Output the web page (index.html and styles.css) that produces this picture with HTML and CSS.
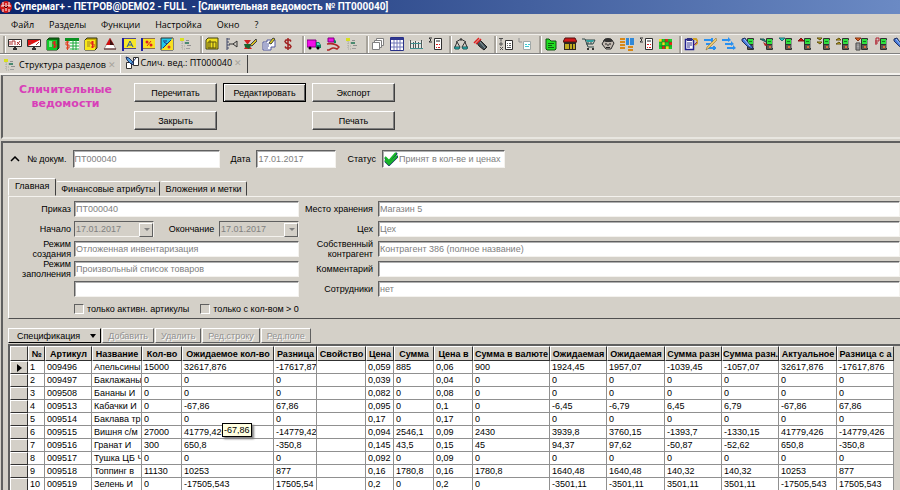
FILE: index.html
```html
<!DOCTYPE html>
<html lang="ru">
<head>
    <meta charset="UTF-8">
    <meta name="viewport" content="width=device-width, initial-scale=1.0">
    <title>Супермаг+ - Сличительная ведомость № ПТ000040</title>
    <link rel="stylesheet" href="styles.css">
</head>
<body>

<!-- общие элементы иконок -->
<svg class="sprite">
    <symbol id="tree" viewBox="0 0 14 14">
        <path d="M3 4v8M3 6h4M3 9h4M3 12h4" stroke="#a8a8a0" fill="none" stroke-dasharray="1 1"/>
        <path d="M1 1h4v3H1z" fill="#d8e020"/><path d="M7 3h3v1H7zM8 8h4v1H8z" fill="#909090"/><path d="M6 5h4v2H6z" fill="#4a8a70"/><path d="M7 11h4v1H7z" fill="#a0a0a0"/>
    </symbol>
    <symbol id="term" viewBox="0 0 14 14">
        <rect x="6" y="1" width="7" height="12" rx="1" fill="#303030"/>
        <path d="M7 2h5v5H7z" fill="#30e040"/><path d="M8 4h3v1H8z" fill="#108020"/>
        <path d="M7 8h5v4H7z" fill="#605850"/><path d="M9 9h2v2H9z" fill="#e07040"/><path d="M12 3h1v8h-1z" fill="#909090"/>
    </symbol>
    <symbol id="sumdoc" viewBox="0 0 14 14">
        <path d="M4 1H1l2 2-2 2h3" stroke="#303030" fill="none"/>
        <path d="M6.500 1.500h7v11h-7z" fill="#fff" stroke="#303030"/><path d="M8 3h4v2H8z" fill="#909090"/>
        <path d="M8 7.500h2M11 7.500h1M8 10.500h1M10 10.500h2" stroke="#e02020"/>
    </symbol>
    <symbol id="torch" viewBox="0 0 14 14">
        <path d="M1 2l3-1 4 6 3 2 1 3-3-1-3-2-5-5z" fill="#4878d8" stroke="#203060"/>
        <path d="M3 2l6 7" stroke="#a8d0ff"/>
    </symbol>
</svg>

<div class="window">
    <header class="titlebar">
        <svg viewBox="0 0 12 12"><circle cx="6" cy="6" r="6" fill="#d01818"/><path d="M3 1v4M9 1v4M1 5h4M7 5h4M3 8v3M9 8v3M6 2v8" stroke="#fff"/><path d="M4 5l2 2 2-2" stroke="#400" fill="none"/></svg>
        <h1>Супермаг+ - ПЕТРОВ@DEMO2 - FULL&nbsp; - [Сличительная ведомость № ПТ000040]</h1>
    </header>

    <nav class="menu">
        <a href="#">Файл</a>
        <a href="#">Разделы</a>
        <a href="#">Функции</a>
        <a href="#">Настройка</a>
        <a href="#">Окно</a>
        <a href="#">?</a>
    </nav>

    <div class="toolbar">
        <div class="group">
            <svg viewBox="0 0 14 14"><path d="M.500 2.500h13v7H.500z" fill="#fff" stroke="#303030"/><path d="M2 4v4M4 4v4M7 4v4M4 4h3M9 5l3 3M12 4L9 8" stroke="#b03030" fill="none"/><path d="M5 12h4M7 10v3" stroke="#303030" stroke-width="2"/></svg>
            <svg viewBox="0 0 14 14"><path d="M.500 2.500h13v7H.500z" fill="#fff" stroke="#303030"/><path d="M1 3h12L7 6 1 9z" fill="#e01010"/><path d="M9 8l3-3M3 4l2 3" stroke="#b03030"/><path d="M5 12h4M7 10v3" stroke="#303030" stroke-width="2"/></svg>
            <svg viewBox="0 0 14 14"><path d="M1 3l2-2h10v10l-2 2H1z" fill="#087010" stroke="#104010"/><path d="M1 3h10v10H1z" fill="#10c828"/><path d="M3 5h3M3 7h3M3 9h3" stroke="#e8ffe0"/><path d="M10 5H7v2h3v3H7M8.500 4v7" stroke="#e02020" fill="none"/></svg>
            <svg viewBox="0 0 14 14"><path d="M0 1h14v3H0z" fill="#089020"/><path d="M5 4v9h9V4z" fill="#fff"/><path d="M5 6h9M5 9h9M5 12h9M8 3v10M11 3v10" stroke="#18a838"/><path d="M4 5H1v3h3v3H1M2.500 4v9" stroke="#e04020" fill="none"/></svg>
            <svg viewBox="0 0 14 14"><path d="M1 3l2-2h10v10l-2 2H1z" fill="#c8b000" stroke="#303010"/><path d="M1 3h10v10H1z" fill="#f8e818"/><path d="M3 5h3M3 7h3M3 9h3" stroke="#a08020"/><path d="M10 5H7v2h3v3H7M8.500 4v7" stroke="#e02020" fill="none"/></svg>
            <svg viewBox="0 0 14 14"><path d="M7 1l6 11H1z" fill="#fff" stroke="#a09090"/><path d="M7 1l4 7H3z" fill="#d01010"/><path d="M7 2v6h4z" fill="#401010"/><path d="M1 12h12" stroke="#502020"/></svg>
            <svg viewBox="0 0 14 14"><path d="M1 1v13" stroke="#2020a0" stroke-width="2"/><path d="M2 2h12v9H2z" fill="#f8e828"/><path d="M2 1.500h12M2 11.500h12" stroke="#504890"/><path d="M5 10l3-6 3 6M6 8h4" stroke="#2050a0" fill="none"/></svg>
            <svg viewBox="0 0 14 14"><path d="M1 1v13" stroke="#2020a0" stroke-width="2"/><path d="M2 2h12v9H2z" fill="#f8e020"/><path d="M2 1.500h12M2 11.500h12" stroke="#907050"/><path d="M6 9l4-5" stroke="#e02020"/><circle cx="6" cy="5" r="1.500" fill="#e02020"/><circle cx="10" cy="8" r="1.500" fill="#e02020"/></svg>
            <svg viewBox="0 0 14 14"><path d="M1 1h12v12H1z" fill="#20c8e8" stroke="#303030"/><path d="M13 1v12H1z" fill="#f8e020"/><path d="M3 11l8-8M3 4h4M4 5l3 2" stroke="#203080"/><circle cx="9" cy="10" r="1.500" fill="#e04020"/></svg>
            <svg><use href="#tree"/></svg>
        </div>
        <div class="group">
            <svg viewBox="0 0 14 14"><path d="M1 3l2-2h10v11H1z" fill="#f0e020" stroke="#404010"/><path d="M3 5h8v6H3zM5 3v8M8 5v6" stroke="#585010" fill="none"/></svg>
            <svg viewBox="0 0 14 14"><path d="M3 1v12M3 2h3M3 5h2M3 8h3M3 11h2" stroke="#404868" fill="none"/><path d="M5 7h4l4-3v6L9 7" stroke="#303030" fill="none"/></svg>
            <svg viewBox="0 0 14 14"><path d="M1 3h7L5 7l4 5H1l3-5z" fill="#d02020"/><path d="M1 7h8l-3 5-4-2z" fill="#186830"/><path d="M7 8l6-6 1 2-5 5z" fill="#d8c020" stroke="#404040"/></svg>
            <svg viewBox="0 0 14 14"><path d="M5 3h8v7H9v3H1V5h4z" fill="#fff" stroke="#5058a0"/><path d="M2 7h5M2 9h5M2 11h4" stroke="#5058a0"/><path d="M7 6l4-5 2 1-4 5z" fill="#e0d020" stroke="#404040"/></svg>
            <svg viewBox="0 0 14 14"><path d="M10 4.500L9 3H5L4 4.500 5 6l4 2 1 1.500L9 11H5L4 9.500M7 1v12" stroke="#a02020" fill="none" stroke-width="1.500"/></svg>
        </div>
        <div class="group">
            <svg viewBox="0 0 14 14"><path d="M0 3h9v7H0z" fill="#f010e8" stroke="#800080"/><path d="M9 5h3l2 3v3H9z" fill="#108060"/><path d="M10 6h2l1 2h-3z" fill="#50e0c0"/><circle cx="3" cy="11" r="1.500"/><circle cx="11" cy="11" r="1.500"/></svg>
            <svg viewBox="0 0 14 14"><path d="M2 1h6v4H2z" fill="#f010e8" stroke="#800080"/><path d="M8 2l2 2v2H8z" fill="#108060"/><path d="M1 7c5-1 9 0 12 3l-2 2c-4-2-5-1-8 1H1" stroke="#b02828" fill="none" stroke-width="1.500"/></svg>
            <svg><use href="#tree"/></svg>
        </div>
        <div class="group">
            <svg viewBox="0 0 14 14"><path d="M5.500 1.500h7v7h-7z" fill="#fff" stroke="#808080"/><path d="M3.500 3.500h7v7h-7z" fill="#fff" stroke="#808080"/><path d="M1.500 5.500h7v7h-7z" fill="#fff" stroke="#808080"/></svg>
            <svg viewBox="0 0 14 14"><path d="M.500.500h13v13H.500z" fill="#fff" stroke="#283088"/><path d="M1 1h12v2H1z" fill="#303890"/><path d="M4 3v10M7 3v10M10 3v10M1 6h12M1 10h12" stroke="#7078b8"/></svg>
            <svg viewBox="0 0 14 14"><path d="M0 4h14v8H0z" fill="#e8e8e4"/><path d="M1.500 3v9M4.500 5v7M6.500 4v8M9.500 5v7M12.500 3v9" stroke="#505858"/><path d="M2 6.500h10M1 11.500h13" stroke="#409090"/></svg>
            <svg><use href="#sumdoc"/></svg>
        </div>
        <div class="group">
            <svg viewBox="0 0 14 14"><path d="M7 1v3M2 5l5-3 5 3M3 5L1 10M3 5l3 5M11 5l-3 5M11 5l2 5" stroke="#303030" fill="none"/><path d="M0 10h6l-1 2H1zM8 10h6l-1 2H9z" fill="#20d0d0" stroke="#205050"/></svg>
            <svg viewBox="0 0 14 14"><path d="M4 6l3-3 2 2 5 5-3 3-5-4z" fill="#405058" stroke="#202020"/><path d="M7 5l5 6" stroke="#90a0a0"/><path d="M1 6l5-5M3 7l5-5" fill="none" stroke="#e02020" stroke-width="1.500"/></svg>
        </div>
        <div class="group">
            <svg viewBox="0 0 14 14"><path d="M0 1.500h4M2 1.500v3M1 6h2v2H1zM1 10l3 3M4 10l-3 3" stroke="#505050" fill="none"/><path d="M6.500 3.500h7v9h-7z" fill="#fff" stroke="#303030"/><path d="M8 6.500h1M10 6.500h2M8 8.500h1M10 8.500h2M8 10.500h4" stroke="#606060"/></svg>
            <svg viewBox="0 0 14 14"><path d="M1 1v4h3" stroke="#909090" fill="none"/><path d="M5.500 4.500h7v8h-7z" fill="#f8ffff" stroke="#a0a8a8"/><path d="M7 7.500h2M10 7.500h2M7 9.500h4" stroke="#40c8d0"/></svg>
        </div>
        <div class="group">
            <svg viewBox="0 0 14 14"><path d="M2 2h3l2 2h5v8l-1 1H3l-1-1z" fill="#20e020" stroke="#105010"/><path d="M4 6.500h6M4 8.500h4M4 10.500h6" stroke="#106010"/></svg>
            <svg viewBox="0 0 14 14"><path d="M2 1h10l2 4H0z" fill="#d01818" stroke="#501010"/><path d="M1 5h12v8H1z" fill="#302820"/><path d="M3 7v5M5 7v5M8 7v5M11 7v5" stroke="#f0d820" stroke-width="1.500"/></svg>
            <svg viewBox="0 0 14 14"><path d="M0 2h3l3 8h6M3 3h10l-2 4H4M6 3v4M9 3v4" stroke="#304848" fill="none"/><path d="M4 3h8l-1 2H5z" fill="#30a0a0"/><circle cx="6" cy="12" r="1"/><circle cx="11" cy="12" r="1"/></svg>
            <svg viewBox="0 0 14 14"><path d="M4 2h6l3 4-3 6H5L1 7z" fill="#c0b8b0" stroke="#282828"/><path d="M2 4c3-4 7-4 10 0l-2 1H5z" fill="#303030"/><path d="M4 7h2M8 7h2M7 7v2M5 10.500h4" stroke="#202020"/></svg>
            <svg viewBox="0 0 14 14"><path d="M0 2h5M0 5h5M0 8h5M0 11h5M8 10h5M8 13h5" stroke="#d88818" stroke-width="2"/><path d="M6 1h3v7H6zM10 1h4v7h-4z" fill="#3088d8"/></svg>
            <svg><use href="#sumdoc"/></svg>
            <svg viewBox="0 0 14 14"><path d="M1 2h13v10H1z" fill="#18d028"/><path d="M1 2h3v3H1zM4 5h3v3H4zM8 9h3v3H8z" fill="#f0e020"/><path d="M7 2h3v3H7zM11 5h3v3h-3zM4 9h3v3H4z" fill="#e02818"/><path d="M4 2v10M7 2v10M11 2v10M1 5h13M1 9h13" stroke="#206020" stroke-width=".5"/></svg>
        </div>
        <div class="group">
            <svg viewBox="0 0 14 14"><path d="M1.500 2.500h8v10h-8z" fill="#fff" stroke="#202090" stroke-width="1.500"/><path d="M3 1h5v3H3z" fill="#303080"/><path d="M3 6h5M3 8h5M3 10h3" stroke="#303090"/><path d="M9 2h3l2 3-3 3" stroke="#d0a020" fill="none" stroke-width="2"/><path d="M10 8l3-3" stroke="#802080"/></svg>
            <svg viewBox="0 0 14 14"><path d="M1 3h8M3 7h6M5 11h8M9 1v4M11 9v4" stroke="#2890f0" stroke-width="2"/><path d="M13 1l1 2-8 8-3 2 1-3z" fill="#e8c870" stroke="#806020" stroke-width=".5"/></svg>
            <svg viewBox="0 0 14 14"><path d="M0 3h7M3 7h7M5 11h7" stroke="#2890f0" stroke-width="2"/><path d="M6 0l3 3-3 2zM9 4l3 3-3 2zM11 8l3 3-3 2z" fill="#2890f0"/></svg>
            <svg viewBox="0 0 14 14"><use href="#term"/><use href="#torch"/></svg>
            <svg viewBox="0 0 14 14"><use href="#term"/><path d="M0 2h4l2 3z" fill="#20a0a0" stroke="#205050"/><path d="M3 5l5 3-3 1z" fill="#b02020"/></svg>
            <svg viewBox="0 0 14 14"><use href="#term"/><path d="M0 1h6L3 4z" fill="#20c8c8" stroke="#207070"/></svg>
            <svg viewBox="0 0 14 14"><use href="#term"/><path d="M3 1l3 3H0z" fill="#c01010" stroke="#801010"/></svg>
            <svg viewBox="0 0 14 14"><use href="#term"/><path d="M0 1h5L3 3zM0 5h5L3 7z" fill="#e0c820" stroke="#605010"/></svg>
            <svg viewBox="0 0 14 14"><use href="#term"/><path d="M3 1l2 2H0zM3 5l2 2H0z" fill="#e0c820" stroke="#605010"/></svg>
            <svg viewBox="0 0 14 14"><use href="#term"/><path d="M0 1h6L3 4z" fill="#e06020" stroke="#803010"/><path d="M1 6h4v7H1z" fill="#c0c0c0" stroke="#404040"/><path d="M2 6v7M4 6v7M1 8h4M1 11h4" stroke="#606060" stroke-width=".5"/></svg>
            <svg viewBox="0 0 14 14"><use href="#term"/><path d="M2 8V1h3v3H1M1 6h3" stroke="#b02030" fill="none"/></svg>
            <svg viewBox="0 0 14 14"><use href="#torch"/></svg>
        </div>
    </div>

    <div class="doc-tabs">
        <button class="doc-tab" type="button"><svg><use href="#tree"/></svg>Структура разделов<span class="close">✕</span></button>
        <button class="doc-tab active" type="button"><svg viewBox="0 0 14 14"><path d="M8.500 1.500h5v8h-5zM1.500 6.500h5v6h-5z" fill="#fff" stroke="#303030"/><path d="M1 1l3 1 5 5-2 2-5-5z" fill="#50a0e0" stroke="#203060"/><path d="M11 2L6 8" stroke="#203060"/></svg>Слич. вед.: ПТ000040<span class="close">✕</span></button>
    </div>

    <section class="panel actions">
        <h2>Сличительные ведомости</h2>
        <div class="buttons">
            <button type="button">Перечитать</button>
            <button type="button" class="default">Редактировать</button>
            <button type="button">Экспорт</button>
            <button type="button">Закрыть</button>
            <button type="button" class="print">Печать</button>
        </div>
    </section>

    <main class="panel document">
        <div class="doc-row">
            <svg class="chevron" viewBox="0 0 10 6"><path d="M1 5l4-4 4 4" fill="none" stroke="#000" stroke-width="1.500"/></svg>
            <label for="number">№ докум.</label>
            <input id="number" class="number" type="text" value="ПТ000040" readonly>
            <label for="date">Дата</label>
            <input id="date" class="date" type="text" value="17.01.2017" readonly>
            <label for="status">Статус</label>
            <div class="status">
                <svg viewBox="0 0 14 14"><path d="M1 6l4 4 8-9M1 9l4 4 9-9" fill="none" stroke="#102860" stroke-width="2"/><path d="M1 5l4 4 7-8M1 8l4 4 8-8" fill="none" stroke="#18b828" stroke-width="2"/></svg>
                <input id="status" type="text" value="Принят в кол-ве и ценах" readonly>
            </div>
        </div>

        <div class="tabs">
            <button type="button" class="active">Главная</button>
            <button type="button">Финансовые атрибуты</button>
            <button type="button">Вложения и метки</button>
        </div>

        <form class="tab-page">
            <div class="fields">
                <label for="order">Приказ</label>
                <input id="order" type="text" value="ПТ000040" readonly>
                <label for="start">Начало</label>
                <div class="period">
                    <span class="select"><select id="start" disabled><option>17.01.2017</option></select></span>
                    <label for="end">Окончание</label>
                    <span class="select"><select id="end" disabled><option>17.01.2017</option></select></span>
                </div>
                <label for="create">Режим<br>создания</label>
                <input id="create" type="text" value="Отложенная инвентаризация" readonly>
                <label for="fill">Режим<br>заполнения</label>
                <input id="fill" type="text" value="Произвольный список товаров" readonly>
                <input class="extra" type="text" aria-label="Дополнительно" readonly>
                <div class="checks">
                    <label><input type="checkbox">только активн. артикулы</label>
                    <label><input type="checkbox">только с кол-вом &gt; 0</label>
                </div>
            </div>
            <div class="fields wide">
                <label for="place">Место хранения</label>
                <input id="place" type="text" value="Магазин 5" readonly>
                <label for="shop">Цех</label>
                <input id="shop" type="text" value="Цех" readonly>
                <label for="agent">Собственный<br>контрагент</label>
                <input id="agent" type="text" value="Контрагент 386 (полное название)" readonly>
                <label for="comment">Комментарий</label>
                <input id="comment" type="text" readonly>
                <label for="staff">Сотрудники</label>
                <input id="staff" type="text" value="нет" readonly>
            </div>
        </form>

        <div class="spec-bar">
            <button type="button" class="spec">Спецификация<svg viewBox="0 0 6 4"><path d="M0 0h6L3 4z"/></svg></button>
            <button type="button" disabled>Добавить</button>
            <button type="button" disabled>Удалить</button>
            <button type="button" disabled>Ред.строку</button>
            <button type="button" disabled>Ред.поле</button>
        </div>

        <div class="grid">
            <table>
                <colgroup>
                    <col class="w18"><col class="w17"><col class="w47"><col class="w50"><col class="w40"><col class="w92"><col class="w43"><col class="w49"><col class="w28"><col class="w40"><col class="w39"><col class="w77"><col class="w57"><col class="w58"><col class="w57"><col class="w57"><col class="w58"><col class="w57">
                </colgroup>
                <thead>
                    <tr><th></th><th>№</th><th>Артикул</th><th>Название</th><th>Кол-во</th><th>Ожидаемое кол-во</th><th>Разница</th><th>Свойство</th><th>Цена</th><th>Сумма</th><th>Цена в</th><th>Сумма в валюте</th><th>Ожидаемая</th><th>Ожидаемая</th><th>Сумма разн</th><th>Сумма разн.</th><th>Актуальное</th><th>Разница с а</th></tr>
                </thead>
                <tbody>
                    <tr><th><svg viewBox="0 0 5 8"><path d="M0 0l5 4-5 4z"/></svg></th><td>1</td><td>009496</td><td>Апельсины</td><td>15000</td><td>32617,876</td><td>-17617,87</td><td></td><td>0,059</td><td>885</td><td>0,06</td><td>900</td><td>1924,45</td><td>1957,07</td><td>-1039,45</td><td>-1057,07</td><td>32617,876</td><td>-17617,876</td></tr>
                    <tr><th></th><td>2</td><td>009497</td><td>Баклажаны</td><td>0</td><td>0</td><td>0</td><td></td><td>0,039</td><td>0</td><td>0,04</td><td>0</td><td>0</td><td>0</td><td>0</td><td>0</td><td>0</td><td>0</td></tr>
                    <tr><th></th><td>3</td><td>009508</td><td>Бананы И</td><td>0</td><td>0</td><td>0</td><td></td><td>0,082</td><td>0</td><td>0,08</td><td>0</td><td>0</td><td>0</td><td>0</td><td>0</td><td>0</td><td>0</td></tr>
                    <tr><th></th><td>4</td><td>009513</td><td>Кабачки И</td><td>0</td><td>-67,86</td><td>67,86</td><td></td><td>0,095</td><td>0</td><td>0,1</td><td>0</td><td>-6,45</td><td>-6,79</td><td>6,45</td><td>6,79</td><td>-67,86</td><td>67,86</td></tr>
                    <tr><th></th><td>5</td><td>009514</td><td>Баклава тр</td><td>0</td><td class="has-hint">0<span class="hint">-67,86</span></td><td>0</td><td></td><td>0,17</td><td>0</td><td>0,17</td><td>0</td><td>0</td><td>0</td><td>0</td><td>0</td><td>0</td><td>0</td></tr>
                    <tr><th></th><td>6</td><td>009515</td><td>Вишня с/м</td><td>27000</td><td>41779,426</td><td>-14779,42</td><td></td><td>0,094</td><td>2546,1</td><td>0,09</td><td>2430</td><td>3939,8</td><td>3760,15</td><td>-1393,7</td><td>-1330,15</td><td>41779,426</td><td>-14779,426</td></tr>
                    <tr><th></th><td>7</td><td>009516</td><td>Гранат И</td><td>300</td><td>650,8</td><td>-350,8</td><td></td><td>0,145</td><td>43,5</td><td>0,15</td><td>45</td><td>94,37</td><td>97,62</td><td>-50,87</td><td>-52,62</td><td>650,8</td><td>-350,8</td></tr>
                    <tr><th></th><td>8</td><td>009517</td><td>Тушка ЦБ Ч</td><td>0</td><td>0</td><td>0</td><td></td><td>0,092</td><td>0</td><td>0,09</td><td>0</td><td>0</td><td>0</td><td>0</td><td>0</td><td>0</td><td>0</td></tr>
                    <tr><th></th><td>9</td><td>009518</td><td>Топпинг в</td><td>11130</td><td>10253</td><td>877</td><td></td><td>0,16</td><td>1780,8</td><td>0,16</td><td>1780,8</td><td>1640,48</td><td>1640,48</td><td>140,32</td><td>140,32</td><td>10253</td><td>877</td></tr>
                    <tr><th></th><td>10</td><td>009519</td><td>Зелень И</td><td>0</td><td>-17505,543</td><td>17505,54</td><td></td><td>0,2</td><td>0</td><td>0,2</td><td>0</td><td>-3501,11</td><td>-3501,11</td><td>3501,11</td><td>3501,11</td><td>-17505,543</td><td>17505,543</td></tr>
                </tbody>
            </table>
        </div>
    </main>
</div>

</body>
</html>
```

FILE: styles.css
```css
* {
    box-sizing: border-box;
}
body {
    margin: 0;
    background-color: #d4d0c8;
    color: #000;
    font-family: "Liberation Sans", Arial, sans-serif;
    font-size: 9px;
    line-height: 10px;
}
button, input, select {
    font: inherit;
    color: inherit;
    margin: 0;
    border-radius: 0;
}
.sprite {
    display: none;
}
.window {
    display: flex;
    flex-direction: column;
    height: 100vh;
    overflow: hidden;
}
.titlebar {
    display: flex;
    flex: none;
    align-items: center;
    gap: 2px;
    height: 14px;
    background: linear-gradient(to right, #0a246a, #6b8ac4);
    color: #fff;
}
.titlebar svg {
    width: 12px;
    height: 12px;
}
.titlebar h1 {
    margin: 0;
    font-family: Roboto, Tahoma, sans-serif;
    font-size: 10px;
    line-height: 14px;
    white-space: nowrap;
}
.menu {
    display: flex;
    flex: none;
    align-items: center;
    gap: 15px;
    height: 20px;
    padding: 3px 11px 0;
    border-bottom: 2px solid #bab6b0;
    font-family: "Open Sans", "Noto Sans", sans-serif;
}
.menu a {
    color: #000;
    text-decoration: none;
}
.toolbar {
    display: flex;
    flex: none;
    align-items: center;
    height: 20px;
    padding-left: 3px;
    border-top: 1px solid #f0eeea;
    border-bottom: 1px solid #808080;
    overflow: hidden;
}
.group {
    display: flex;
    flex: none;
    gap: 5px;
    padding: 1px 7px 2px 3px;
    border-left: 2px solid #a8a49c;
    box-shadow: inset 1px 0 #fff;
}
.group svg {
    width: 14px;
    height: 14px;
}
.doc-tabs {
    display: flex;
    flex: none;
    height: 21px;
    border-top: 1px solid #fff;
    border-bottom: 2px solid #f4f2ee;
}
.doc-tab {
    display: flex;
    align-items: center;
    gap: 2px;
    padding: 2px 4px 0 3px;
    background: none;
    border: none;
    border-right: 1px solid #fff;
    font-family: "Open Sans", "Noto Sans", sans-serif;
    white-space: nowrap;
}
.doc-tab svg {
    width: 14px;
    height: 14px;
}
.doc-tab.active {
    padding: 0 5px 2px 4px;
    border-right: 1px solid #404040;
}
.close {
    color: #a8a49c;
    font-family: "DejaVu Sans", sans-serif;
}
.panel {
    border-left: 2px solid #606060;
    margin-left: 1px;
}
.actions {
    display: flex;
    flex: none;
    gap: 16px;
    height: 64px;
    padding: 7px 0 0 10px;
    border-top: 1px solid #808080;
    border-bottom: 2px solid #e8e6e0;
}
.actions h2 {
    width: 105px;
    margin: 0;
    color: #d840b8;
    font-family: "DejaVu Sans", Verdana, sans-serif;
    font-size: 11px;
    line-height: 14px;
    text-align: center;
}
.buttons {
    display: grid;
    grid-template-columns: repeat(3, 83px);
    grid-auto-rows: 19px;
    gap: 9px 6px;
}
.buttons button {
    padding: 0;
    background-color: #d4d0c8;
    border: 1px solid;
    border-color: #fff #404040 #404040 #fff;
    box-shadow: inset -1px -1px #808080;
}
.buttons .default {
    border-color: #000;
    box-shadow: inset 1px 1px #fff, inset -1px -1px #606060;
}
.buttons .print {
    grid-column: 3;
}
.document {
    flex: 1;
    min-height: 0;
    margin-top: 2px;
    padding: 7px 0 0 5px;
    border-top: 2px solid #606060;
}
input[type="text"], .status {
    height: 16px;
    padding: 0 0 0 1px;
    background-color: #fff;
    border: 1px solid;
    border-color: #606060 #f4f2ee #f4f2ee #606060;
    box-shadow: inset 1px 1px #b0b0b0;
    color: #808080;
}
.doc-row {
    display: flex;
    align-items: center;
    gap: 6px;
    height: 18px;
}
.doc-row input, .doc-row .status {
    height: 18px;
}
.chevron {
    width: 10px;
    height: 6px;
    margin: 0 1px 0 2px;
}
.doc-row .number {
    width: 147px;
    margin-right: 5px;
}
.doc-row .date {
    width: 80px;
    margin-right: 5px;
}
.status {
    display: flex;
    align-items: center;
    width: 123px;
}
.status svg {
    flex: none;
    width: 14px;
    height: 14px;
}
.status input[type="text"] {
    width: 100%;
    height: 14px;
    background: none;
    border: none;
    box-shadow: none;
}
.tabs {
    display: flex;
    align-items: flex-end;
    height: 18px;
    margin-top: 10px;
}
.tabs button {
    height: 15px;
    padding: 0 4px;
    background: none;
    border: 1px solid;
    border-color: #fff #404040 transparent transparent;
    border-radius: 2px 2px 0 0;
    white-space: nowrap;
}
.tabs .active {
    height: 18px;
    padding: 0 6px 2px;
    border-left-color: #fff;
}
.tab-page {
    display: flex;
    gap: 4px;
    height: 123px;
    padding-top: 2px;
    border: 1px solid;
    border-color: #f4f2ee transparent #505050 #fff;
    border-right: none;
}
.fields {
    display: grid;
    grid-template-columns: 62px 225px;
    grid-auto-rows: 20px;
    align-content: start;
    align-items: center;
    column-gap: 3px;
}
.fields > label {
    text-align: right;
}
.fields label, .doc-row label {
    white-space: nowrap;
}
.fields .extra, .checks {
    grid-column: 2;
}
.wide {
    flex: 1;
    grid-template-columns: 70px 1fr;
    column-gap: 5px;
}
.period {
    display: flex;
    align-items: center;
    justify-content: space-between;
}
.period label {
    margin-left: 10px;
}
.select {
    position: relative;
    display: flex;
    width: 80px;
}
.select select {
    width: 100%;
    height: 16px;
    padding: 0 1px;
    appearance: none;
    background-color: #d4d0c8;
    border: 1px solid;
    border-color: #606060 #f4f2ee #f4f2ee #606060;
    color: #808080;
    opacity: 1;
}
.select::before {
    content: "";
    position: absolute;
    top: 2px;
    right: 1px;
    width: 12px;
    height: 12px;
    border: 1px solid;
    border-color: #fff #606060 #606060 #fff;
}
.select::after {
    content: "";
    position: absolute;
    top: 7px;
    right: 4px;
    border: 3px solid transparent;
    border-top-color: #808080;
    border-bottom: none;
}
.checks {
    display: flex;
    gap: 11px;
}
.checks label {
    display: flex;
    align-items: center;
    gap: 3px;
}
.checks input {
    width: 10px;
    height: 10px;
    appearance: none;
    border: 1px solid;
    border-color: #606060 #fff #fff #606060;
}
.spec-bar {
    display: flex;
    gap: 1px;
    height: 15px;
    margin-top: 9px;
}
.spec-bar button {
    padding: 0 5px;
    background-color: #d4d0c8;
    border: 1px solid;
    border-color: #fff #606060 #606060 #fff;
    white-space: nowrap;
}
.spec-bar button:disabled {
    color: #909090;
    text-shadow: 1px 1px #fff;
}
.spec-bar .spec {
    display: flex;
    align-items: center;
    gap: 10px;
    padding: 0 4px 0 8px;
    border-color: #fff #000 #000 #fff;
}
.spec svg {
    width: 6px;
    height: 4px;
}
.grid {
    margin-top: 1px;
    border-top: 2px solid #606060;
    border-left: 2px solid #606060;
}
table {
    width: 884px;
    table-layout: fixed;
    border-collapse: separate;
    border-spacing: 0;
}
th, td {
    height: 13px;
    padding: 0 0 0 2px;
    overflow: hidden;
    white-space: nowrap;
}
td {
    background-color: #fff;
    border-right: 1px solid #909090;
    border-bottom: 1px solid #909090;
}
th {
    padding: 0;
    background-color: #d4d0c8;
    border: 1px solid;
    border-color: #fff #303030 #303030 #fff;
    text-align: center;
}
thead th {
    height: 15px;
}
th svg {
    display: block;
    width: 5px;
    height: 8px;
    margin: 0 auto;
}
.has-hint {
    position: relative;
    overflow: visible;
}
.hint {
    position: absolute;
    z-index: 1;
    top: 10px;
    left: 40px;
    padding: 1px;
    background-color: #ffffe1;
    border: 1px solid #000;
    box-shadow: 2px 2px 2px #808080;
}
.w17 { width: 17px; }
.w18 { width: 18px; }
.w28 { width: 28px; }
.w39 { width: 39px; }
.w40 { width: 40px; }
.w43 { width: 43px; }
.w47 { width: 47px; }
.w49 { width: 49px; }
.w50 { width: 50px; }
.w57 { width: 57px; }
.w58 { width: 58px; }
.w77 { width: 77px; }
.w92 { width: 92px; }
```
